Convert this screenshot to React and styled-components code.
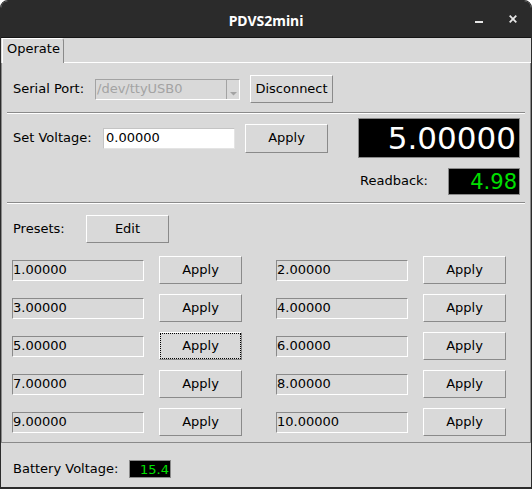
import React from 'react';
import styled, { createGlobalStyle } from 'styled-components';

const GlobalStyle = createGlobalStyle`
  body {
    margin: 0;
    background: #ffffff;
  }
`;

const Window = styled('div')`
  width: 532px;
  height: 489px;
  box-sizing: border-box;
  border: 1px solid #2b2b2b;
  border-bottom-width: 2px;
  border-radius: 8px 8px 0 0;
  background: #d9d9d9;
  display: flex;
  flex-direction: column;
  overflow: hidden;
  font-family: 'DejaVu Sans', sans-serif;
  font-size: 13px;
  color: #000;
`;

const TitleBar = styled('div')`
  height: 37px;
  box-sizing: border-box;
  flex: none;
  background: #2b2b2b;
  border-bottom: 1px solid #151515;
  display: grid;
  grid-template-columns: 1fr auto 1fr;
  align-items: center;
  padding-top: 2px;
`;

const Title = styled('div')`
  grid-column: 2;
  font-family: 'Noto Sans', sans-serif;
  font-weight: bold;
  font-size: 14px;
  color: #ffffff;
`;

const Controls = styled('div')`
  justify-self: end;
  display: flex;
  align-items: center;
  gap: 26px;
  padding-right: 14px;
  margin-top: -2px;
`;

const ControlIcon = styled('svg')`
  width: 8px;
  height: 8px;
  display: block;
`;

const TabBar = styled('div')`
  height: 25px;
  flex: none;
  display: flex;
`;

const Tab = styled('div')`
  margin-left: 1px;
  width: 62px;
  box-sizing: border-box;
  border-left: 1px solid #ffffff;
  border-top: 1px solid #ffffff;
  border-right: 1px solid #8a8a8a;
  border-top-right-radius: 3px;
  padding: 2px 0 0 4px;
`;

const TabFill = styled('div')`
  flex: 1;
  border-bottom: 1px solid #ffffff;
`;

const Pane = styled('div')`
  height: 380px;
  flex: none;
  box-sizing: border-box;
  border-left: 1px solid #8a8a8a;
  border-right: 1px solid #8a8a8a;
  border-bottom: 1px solid #8a8a8a;
  padding: 12px 10px 0 11px;
`;

const Row = styled('div')`
  display: flex;
  align-items: center;
  height: ${(p) => p.$h || 28}px;
  margin-top: ${(p) => p.$mt || 0}px;
`;

const Label = styled('div')`
  width: ${(p) => p.$w}px;
  flex: none;
  white-space: nowrap;
  padding-bottom: 2px;
`;

const Button = styled('button')`
  width: 83px;
  height: ${(p) => p.$h || 28}px;
  flex: none;
  margin-left: ${(p) => p.$ml || 0}px;
  box-sizing: border-box;
  background: #d9d9d9;
  border: 1px solid;
  border-color: #ffffff #8a8a8a #8a8a8a #ffffff;
  font-family: 'DejaVu Sans', sans-serif;
  font-size: 13px;
  color: #000;
  padding: 0 0 2px 0;
  outline: ${(p) => (p.$focused ? '1px dotted #000' : 'none')};
  outline-offset: -2px;
`;

const Combo = styled('div')`
  width: 145px;
  height: 21px;
  box-sizing: border-box;
  border: 1px solid;
  border-color: #a3a3a3 #ffffff #ffffff #a3a3a3;
  display: flex;
  align-items: center;
  color: #a3a3a3;
  padding-left: 1px;
`;

const ComboText = styled('div')`
  flex: 1;
  padding-bottom: 1px;
`;

const ComboArrow = styled('div')`
  width: 13px;
  height: 19px;
  box-sizing: border-box;
  border-left: 1px solid #a3a3a3;
  display: flex;
  align-items: flex-end;
  justify-content: center;
  padding-bottom: 3px;
`;

const Separator = styled('div')`
  margin: ${(p) => p.$mt}px -5px 0 -6px;
  border-top: 1px solid #8a8a8a;
  border-bottom: 1px solid #ffffff;
`;

const VoltageGrid = styled('div')`
  margin-top: 4px;
  display: grid;
  grid-template-columns: 1fr 162px;
  grid-template-rows: 40px 27px;
  row-gap: 10px;
`;

const SetRow = styled('div')`
  display: flex;
  align-items: center;
`;

const Entry = styled('input')`
  width: ${(p) => p.$w || 132}px;
  height: 21px;
  flex: none;
  box-sizing: border-box;
  background: ${(p) => (p.readOnly ? '#d9d9d9' : '#ffffff')};
  border: 1px solid;
  border-color: ${(p) =>
    p.readOnly ? '#8a8a8a #ffffff #ffffff #8a8a8a' : '#c4c4c4 #e4e4e4 #e4e4e4 #c4c4c4'};
  font-family: 'DejaVu Sans', sans-serif;
  font-size: 13px;
  color: #000;
  padding: 0 0 1px ${(p) => (p.readOnly ? 0 : 2)}px;
  outline: none;
`;

const Display = styled('div')`
  box-sizing: border-box;
  background: #000;
  border: 1px solid #8a8a8a;
  color: ${(p) => p.$color};
  font-size: ${(p) => p.$size}px;
  text-align: right;
  padding-right: ${(p) => p.$pr || 2}px;
  display: flex;
  align-items: center;
  justify-content: flex-end;
  overflow: hidden;
  white-space: nowrap;
`;

const BigDisplay = styled(Display)`
  width: 162px;
  height: 40px;
`;

const ReadbackRow = styled('div')`
  grid-column: 2;
  display: flex;
  align-items: center;
  justify-content: space-between;
  padding-left: 2px;
`;

const SmallDisplay = styled(Display)`
  width: ${(p) => p.$w}px;
  height: ${(p) => p.$h}px;
`;

const PresetGrid = styled('div')`
  margin: 13px 0 0 -1px;
  display: grid;
  grid-template-columns: repeat(2, 230px);
  column-gap: 34px;
  row-gap: 10px;
`;

const PresetItem = styled('div')`
  display: flex;
  align-items: center;
  gap: 15px;
  height: 28px;
`;

const StatusBar = styled('div')`
  flex: 1;
  display: flex;
  align-items: center;
  padding: 8px 0 0 12px;
`;

const presets = [
  '1.00000', '2.00000', '3.00000', '4.00000', '5.00000',
  '6.00000', '7.00000', '8.00000', '9.00000', '10.00000',
];

const App = () => {
  return (
    <>
      <GlobalStyle />
      <Window>
        <TitleBar>
          <Title>PDVS2mini</Title>
          <Controls>
            <ControlIcon viewBox="0 0 8 8">
              <rect x="0" y="6" width="8" height="2" fill="#e6e6e6" />
            </ControlIcon>
            <ControlIcon viewBox="0 0 8 8">
              <path d="M0.7 0.7 L7.3 7.3 M7.3 0.7 L0.7 7.3" stroke="#e6e6e6" strokeWidth="1.8" />
            </ControlIcon>
          </Controls>
        </TitleBar>

        <TabBar>
          <Tab>Operate</Tab>
          <TabFill />
        </TabBar>

        <Pane>
          <Row>
            <Label $w={82}>Serial Port:</Label>
            <Combo>
              <ComboText>/dev/ttyUSB0</ComboText>
              <ComboArrow>
                <svg width="7" height="4" viewBox="0 0 7 4">
                  <path d="M0 0 H7 L3.5 3.5 Z" fill="#a3a3a3" />
                </svg>
              </ComboArrow>
            </Combo>
            <Button $ml={10}>Disconnect</Button>
          </Row>

          <Separator $mt={9} />

          <VoltageGrid>
            <SetRow>
              <Label $w={90}>Set Voltage:</Label>
              <Entry defaultValue="0.00000" />
              <Button $ml={10} $h={29}>Apply</Button>
            </SetRow>
            <BigDisplay $color="#ffffff" $size={31} $pr={3}>5.00000</BigDisplay>
            <ReadbackRow>
              <Label>Readback:</Label>
              <SmallDisplay $w={72} $h={27} $color="#00e000" $size={21}>4.98</SmallDisplay>
            </ReadbackRow>
          </VoltageGrid>

          <Separator $mt={7} />

          <Row $mt={11}>
            <Label $w={73}>Presets:</Label>
            <Button>Edit</Button>
          </Row>

          <PresetGrid>
            {presets.map((value, i) => (
              <PresetItem key={value}>
                <Entry readOnly value={value} />
                <Button $focused={i === 4}>Apply</Button>
              </PresetItem>
            ))}
          </PresetGrid>
        </Pane>

        <StatusBar>
          <Label $w={116}>Battery Voltage:</Label>
          <SmallDisplay $w={42} $h={18} $color="#00e000" $size={13} $pr={1}>15.4</SmallDisplay>
        </StatusBar>
      </Window>
    </>
  );
};

export default App;
